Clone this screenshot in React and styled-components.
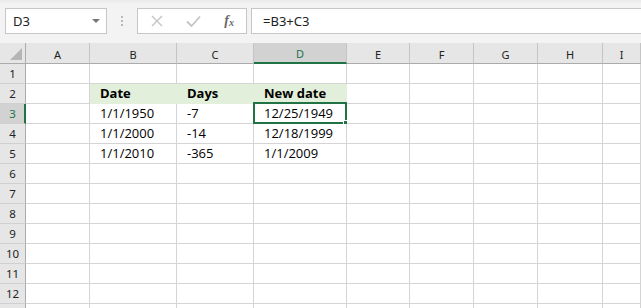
import React from "react"
import styled, { createGlobalStyle } from "styled-components"

const GlobalStyle = createGlobalStyle`
  html, body {
    margin: 0;
    padding: 0;
    background: #ffffff;
  }
`

const columns = ["A", "B", "C", "D", "E", "F", "G", "H", "I"]
const widths = [64, 87, 77, 93, 63, 64, 64, 65]

const data = {
  2: { B: "Date", C: "Days", D: "New date" },
  3: { B: "1/1/1950", C: "-7", D: "12/25/1949" },
  4: { B: "1/1/2000", C: "-14", D: "12/18/1999" },
  5: { B: "1/1/2010", C: "-365", D: "1/1/2009" },
}

// row 13 only peeks in at the bottom edge, its label is out of view
const rows = [1, 2, 3, 4, 5, 6, 7, 8, 9, 10, 11, 12, 13]
const lastVisibleLabel = 12
const activeCol = "D"
const activeRow = 3

const App = () => {
  return (
    <React.Fragment>
      <GlobalStyle />
      <StyledWindow>
        <StyledToolbar>
          <StyledNameBox>
            <span>D3</span>
            <StyledDropArrow />
          </StyledNameBox>
          <StyledGrip>
            <i />
            <i />
            <i />
          </StyledGrip>
          <StyledFormulaButtons>
            <svg width="12" height="12" viewBox="0 0 12 12">
              <path d="M1 1 L11 11 M11 1 L1 11" stroke="#c4c4c4" strokeWidth="1.4" fill="none" />
            </svg>
            <svg width="15" height="12" viewBox="0 0 15 12">
              <path d="M1 6.5 L5.5 11 L14 1.5" stroke="#c4c4c4" strokeWidth="1.8" fill="none" />
            </svg>
            <StyledFx>
              f<sub>x</sub>
            </StyledFx>
          </StyledFormulaButtons>
          <StyledFormulaInput>=B3+C3</StyledFormulaInput>
        </StyledToolbar>

        <StyledSheet>
          <StyledCorner>
            <svg width="12" height="12" viewBox="0 0 12 12">
              <polygon points="12,0 12,12 0,12" fill="#b5b5b5" />
            </svg>
          </StyledCorner>
          {columns.map(c => (
            <StyledColHeader key={c} $active={c === activeCol}>
              {c}
            </StyledColHeader>
          ))}

          {rows.map(r => (
            <React.Fragment key={r}>
              <StyledRowHeader $active={r === activeRow}>
                {r <= lastVisibleLabel ? r : null}
              </StyledRowHeader>
              {columns.map(c => {
                const value = data[r] && data[r][c]
                const filled = r === 2 && ["B", "C", "D"].includes(c)
                return (
                  <StyledCell
                    key={c}
                    $filled={filled}
                    $bold={r === 2}
                    $selected={r === activeRow && c === activeCol}
                  >
                    {value}
                  </StyledCell>
                )
              })}
            </React.Fragment>
          ))}
        </StyledSheet>
      </StyledWindow>
    </React.Fragment>
  )
}
export default App

//Styled

const StyledWindow = styled.div`
  width: 641px;
  height: 308px;
  overflow: hidden;
  background: #ffffff;
`

const StyledToolbar = styled.div`
  height: 43px;
  box-sizing: border-box;
  padding: 8px 0 0 5px;
  display: flex;
  align-items: flex-start;
  background: linear-gradient(#e9e9e9 0px, #f3f3f3 4px, #f3f3f3 100%);
  font-family: "Noto Sans", "Open Sans", sans-serif;
`

const StyledNameBox = styled.div`
  width: 102px;
  height: 26px;
  box-sizing: border-box;
  border: 1px solid #c6c6c6;
  background: #ffffff;
  display: flex;
  align-items: center;
  justify-content: space-between;
  padding: 0 6px 0 7px;
  font-size: 13px;
  color: #222222;
`

const StyledDropArrow = styled.span`
  width: 0;
  height: 0;
  border-left: 4px solid transparent;
  border-right: 4px solid transparent;
  border-top: 4px solid #777777;
`

const StyledGrip = styled.div`
  width: 30px;
  height: 26px;
  display: flex;
  flex-direction: column;
  align-items: center;
  justify-content: center;
  gap: 2px;

  i {
    width: 2px;
    height: 2px;
    background: #b8b8b8;
  }
`

const StyledFormulaButtons = styled.div`
  width: 110px;
  height: 26px;
  box-sizing: border-box;
  border: 1px solid #c6c6c6;
  background: #ffffff;
  display: flex;
  align-items: center;
  justify-content: space-between;
  padding: 0 12px 0 13px;
`

const StyledFx = styled.span`
  font-family: "Liberation Serif", "DejaVu Serif", serif;
  font-style: italic;
  font-weight: bold;
  font-size: 14px;
  color: #6a6a6a;
  line-height: 1;

  sub {
    font-size: 10px;
    vertical-align: -1px;
  }
`

const StyledFormulaInput = styled.div`
  flex: 1;
  margin-left: 4px;
  height: 26px;
  box-sizing: border-box;
  border: 1px solid #c6c6c6;
  border-right: none;
  background: #ffffff;
  display: flex;
  align-items: center;
  padding-left: 11px;
  font-size: 13px;
  color: #222222;
`

const StyledSheet = styled.div`
  display: grid;
  grid-template-columns: 26px ${widths.map(w => `${w}px`).join(" ")} 1fr;
  grid-template-rows: 21px;
  grid-auto-rows: 20px;
`

const StyledCorner = styled.div`
  box-sizing: border-box;
  background: #e6e6e6;
  border-right: 1px solid #ababab;
  border-bottom: 1px solid #ababab;
  display: flex;
  align-items: flex-end;
  justify-content: flex-end;
  padding: 0 3px 3px 0;
`

const StyledColHeader = styled.div`
  box-sizing: border-box;
  background: ${p => (p.$active ? "#d2d2d2" : "#e6e6e6")};
  border-right: 1px solid #c4c4c4;
  border-bottom: ${p => (p.$active ? "2px solid #217346" : "1px solid #ababab")};
  color: ${p => (p.$active ? "#217346" : "#222222")};
  font-family: "Noto Sans", "Open Sans", sans-serif;
  font-size: 11px;
  display: flex;
  align-items: center;
  justify-content: center;
  padding-top: 2px;
`

const StyledRowHeader = styled.div`
  box-sizing: border-box;
  background: ${p => (p.$active ? "#d2d2d2" : "#e6e6e6")};
  border-right: ${p => (p.$active ? "2px solid #217346" : "1px solid #ababab")};
  border-bottom: 1px solid #d0d0d0;
  color: ${p => (p.$active ? "#217346" : "#222222")};
  font-family: "Noto Sans", "Open Sans", sans-serif;
  font-size: 11.5px;
  display: flex;
  align-items: center;
  justify-content: center;
  padding-left: ${p => (p.$active ? "1px" : "0")};
`

const StyledCell = styled.div`
  position: relative;
  box-sizing: border-box;
  background: ${p => (p.$filled ? "#e2efda" : "#ffffff")};
  border-right: 1px solid ${p => (p.$filled ? "#e2efda" : "#d4d4d4")};
  border-bottom: 1px solid ${p => (p.$filled ? "#e2efda" : "#d4d4d4")};
  padding-left: 10px;
  font-family: "Open Sans", "Noto Sans", sans-serif;
  font-size: 13px;
  font-weight: ${p => (p.$bold ? 700 : 400)};
  line-height: 19px;
  color: #000000;
  white-space: nowrap;

  ${p =>
    p.$selected &&
    `
    &::before {
      content: "";
      position: absolute;
      top: -2px;
      left: -1px;
      right: -1px;
      bottom: -1px;
      border: 2px solid #217346;
    }
    &::after {
      content: "";
      position: absolute;
      right: -4px;
      bottom: -4px;
      width: 5px;
      height: 5px;
      background: #217346;
      border: 1px solid #ffffff;
    }
  `}
`
